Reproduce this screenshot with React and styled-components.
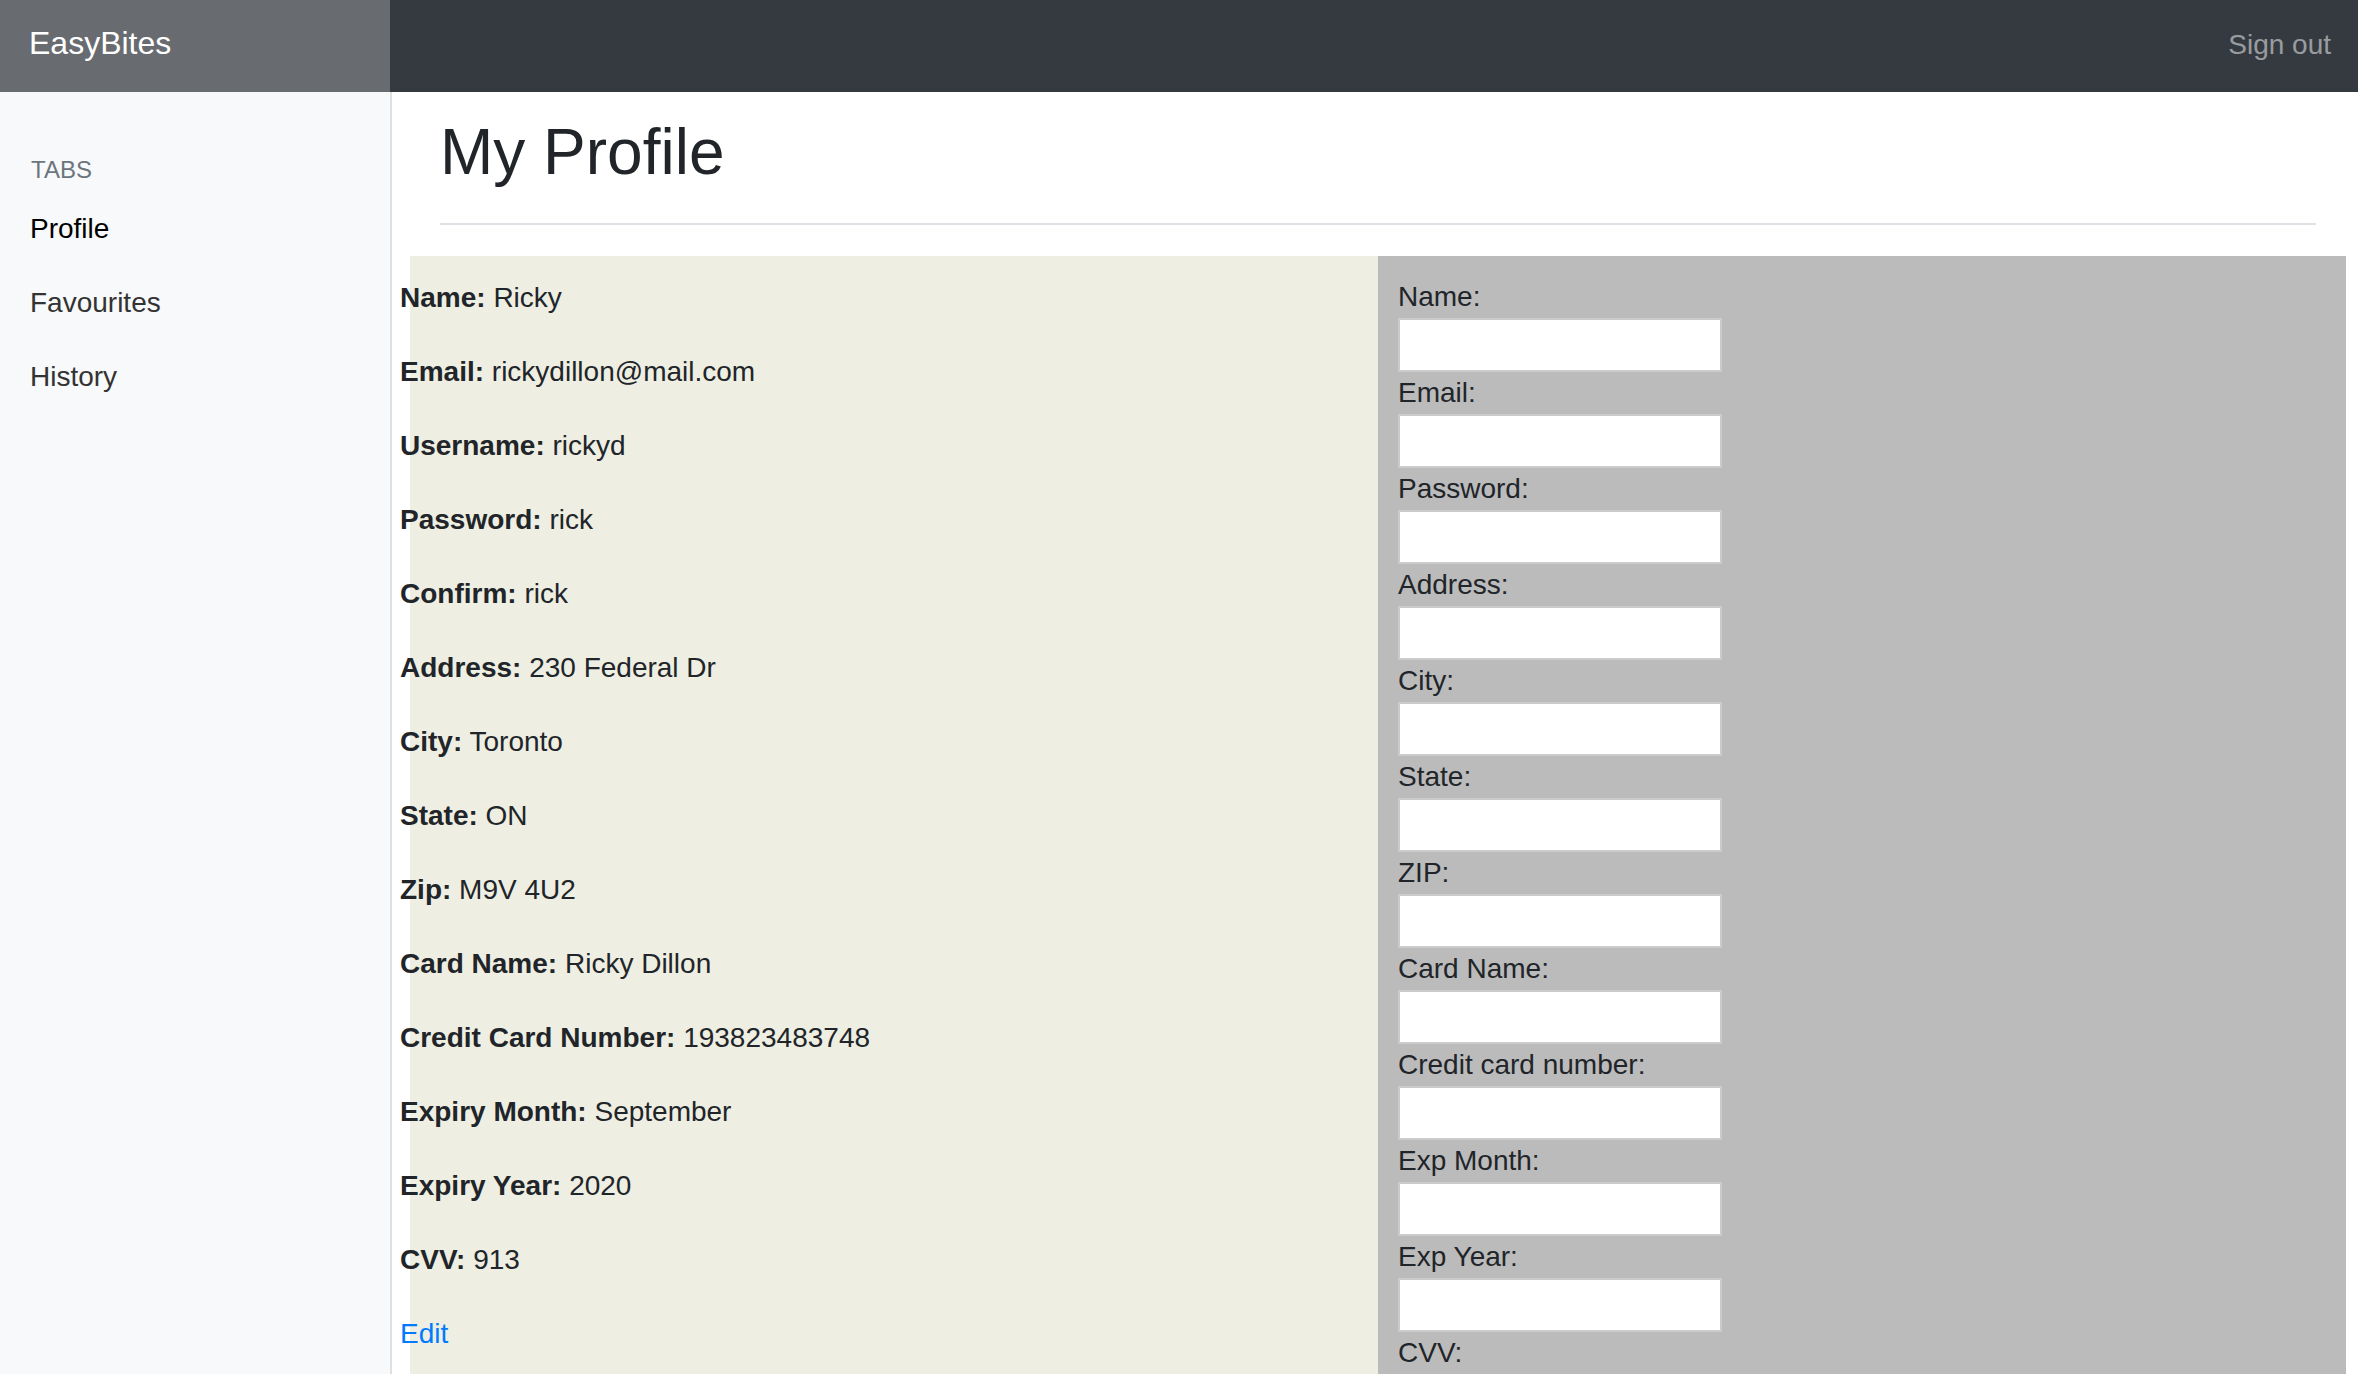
import React from 'react';
import styled, { createGlobalStyle } from 'styled-components';

const GlobalStyle = createGlobalStyle`
  html, body {
    margin: 0;
    padding: 0;
    height: 100%;
    overflow: hidden;
  }
  body {
    font-family: "Liberation Sans", Arial, Helvetica, sans-serif;
    color: #212529;
    background: #ffffff;
  }
  *, *::before, *::after { box-sizing: border-box; }
`;

const Page = styled.div`
  display: flex;
  flex-direction: column;
  height: 100vh;
  overflow: hidden;
`;

const TopBar = styled.header`
  display: flex;
  align-items: center;
  height: 92px;
  flex-shrink: 0;
  background: #343a40;
`;

const Brand = styled.a`
  align-self: stretch;
  width: 390px;
  flex-shrink: 0;
  padding: 19px 0 0 29px;
  background: #686c71;
  color: #ffffff;
  font-size: 32px;
  line-height: 48px;
  text-decoration: none;
`;

const TopNav = styled.div`
  flex: 1;
  display: flex;
  justify-content: flex-end;
  padding: 0 27px 3px 0;
`;

const SignOut = styled.a`
  color: rgba(255, 255, 255, 0.5);
  font-size: 28px;
  line-height: 42px;
  text-decoration: none;
`;

const Body = styled.div`
  display: flex;
  flex: 1;
  min-height: 0;
`;

const Sidebar = styled.nav`
  width: 392px;
  flex-shrink: 0;
  padding-top: 60px;
  background: #f8f9fa;
  border-right: 2px solid #dfe0e1;
`;

const SidebarHeading = styled.h6`
  margin: 0 0 4px;
  padding: 0 31px;
  font-size: 24px;
  line-height: 36px;
  font-weight: 400;
  text-transform: uppercase;
  color: #6c757d;
`;

const NavList = styled.ul`
  list-style: none;
  margin: 0;
  padding: 0;
`;

const NavLink = styled.a`
  display: block;
  padding: 16px 30px;
  font-size: 28px;
  line-height: 42px;
  color: ${(p) => (p.$active ? '#000000' : '#333333')};
  text-decoration: none;
`;

const Main = styled.main`
  flex: 1;
  min-width: 0;
  padding: 22px 42px 0 48px;
  overflow: hidden;
`;

const TitleBar = styled.div`
  padding-bottom: 16px;
  margin-bottom: 31px;
  border-bottom: 2px solid #dee2e6;
`;

const Title = styled.h2`
  margin: 0 0 16px;
  font-size: 64px;
  line-height: 1.2;
  font-weight: 400;
  color: #212529;
`;

const Columns = styled.div`
  display: grid;
  grid-template-columns: 1fr 1fr;
  margin: 0 -30px;
`;

const DetailsPanel = styled.section`
  padding-top: 21px;
  background: #eeeee2;
`;

const Detail = styled.p`
  margin: 0 0 32px -10px;
  font-size: 28px;
  line-height: 42px;
  color: #212529;

  b {
    font-weight: 700;
  }
`;

const EditLink = styled.a`
  display: inline-block;
  margin-left: -10px;
  font-size: 28px;
  line-height: 42px;
  color: #007bff;
  text-decoration: none;
`;

const FormPanel = styled.form`
  padding: 20px 20px;
  background: #bbbbbb;
`;

const Label = styled.label`
  display: block;
  font-size: 28px;
  line-height: 42px;
  color: #212529;
`;

const Input = styled.input`
  display: block;
  width: 324px;
  height: 54px;
  margin: 0;
  padding: 0 6px;
  border: 2px solid #cbcbcb;
  background: #ffffff;
  font: inherit;
  font-size: 28px;
`;

const details = [
  ['Name', 'Ricky'],
  ['Email', 'rickydillon@mail.com'],
  ['Username', 'rickyd'],
  ['Password', 'rick'],
  ['Confirm', 'rick'],
  ['Address', '230 Federal Dr'],
  ['City', 'Toronto'],
  ['State', 'ON'],
  ['Zip', 'M9V 4U2'],
  ['Card Name', 'Ricky Dillon'],
  ['Credit Card Number', '193823483748'],
  ['Expiry Month', 'September'],
  ['Expiry Year', '2020'],
  ['CVV', '913'],
];

const fields = [
  'Name',
  'Email',
  'Password',
  'Address',
  'City',
  'State',
  'ZIP',
  'Card Name',
  'Credit card number',
  'Exp Month',
  'Exp Year',
  'CVV',
];

export default function App() {
  return (
    <>
      <GlobalStyle />
      <Page>
        <TopBar>
          <Brand href="#">EasyBites</Brand>
          <TopNav>
            <SignOut href="#">Sign out</SignOut>
          </TopNav>
        </TopBar>
        <Body>
          <Sidebar>
            <SidebarHeading>Tabs</SidebarHeading>
            <NavList>
              <li><NavLink href="#" $active>Profile</NavLink></li>
              <li><NavLink href="#">Favourites</NavLink></li>
              <li><NavLink href="#">History</NavLink></li>
            </NavList>
          </Sidebar>
          <Main>
            <TitleBar>
              <Title>My Profile</Title>
            </TitleBar>
            <Columns>
              <DetailsPanel>
                {details.map(([k, v]) => (
                  <Detail key={k}>
                    <b>{k}:</b> {v}
                  </Detail>
                ))}
                <EditLink href="#">Edit</EditLink>
              </DetailsPanel>
              <FormPanel onSubmit={(e) => e.preventDefault()}>
                {fields.map((f) => (
                  <div key={f}>
                    <Label>{f}:</Label>
                    <Input type="text" />
                  </div>
                ))}
              </FormPanel>
            </Columns>
          </Main>
        </Body>
      </Page>
    </>
  );
}
